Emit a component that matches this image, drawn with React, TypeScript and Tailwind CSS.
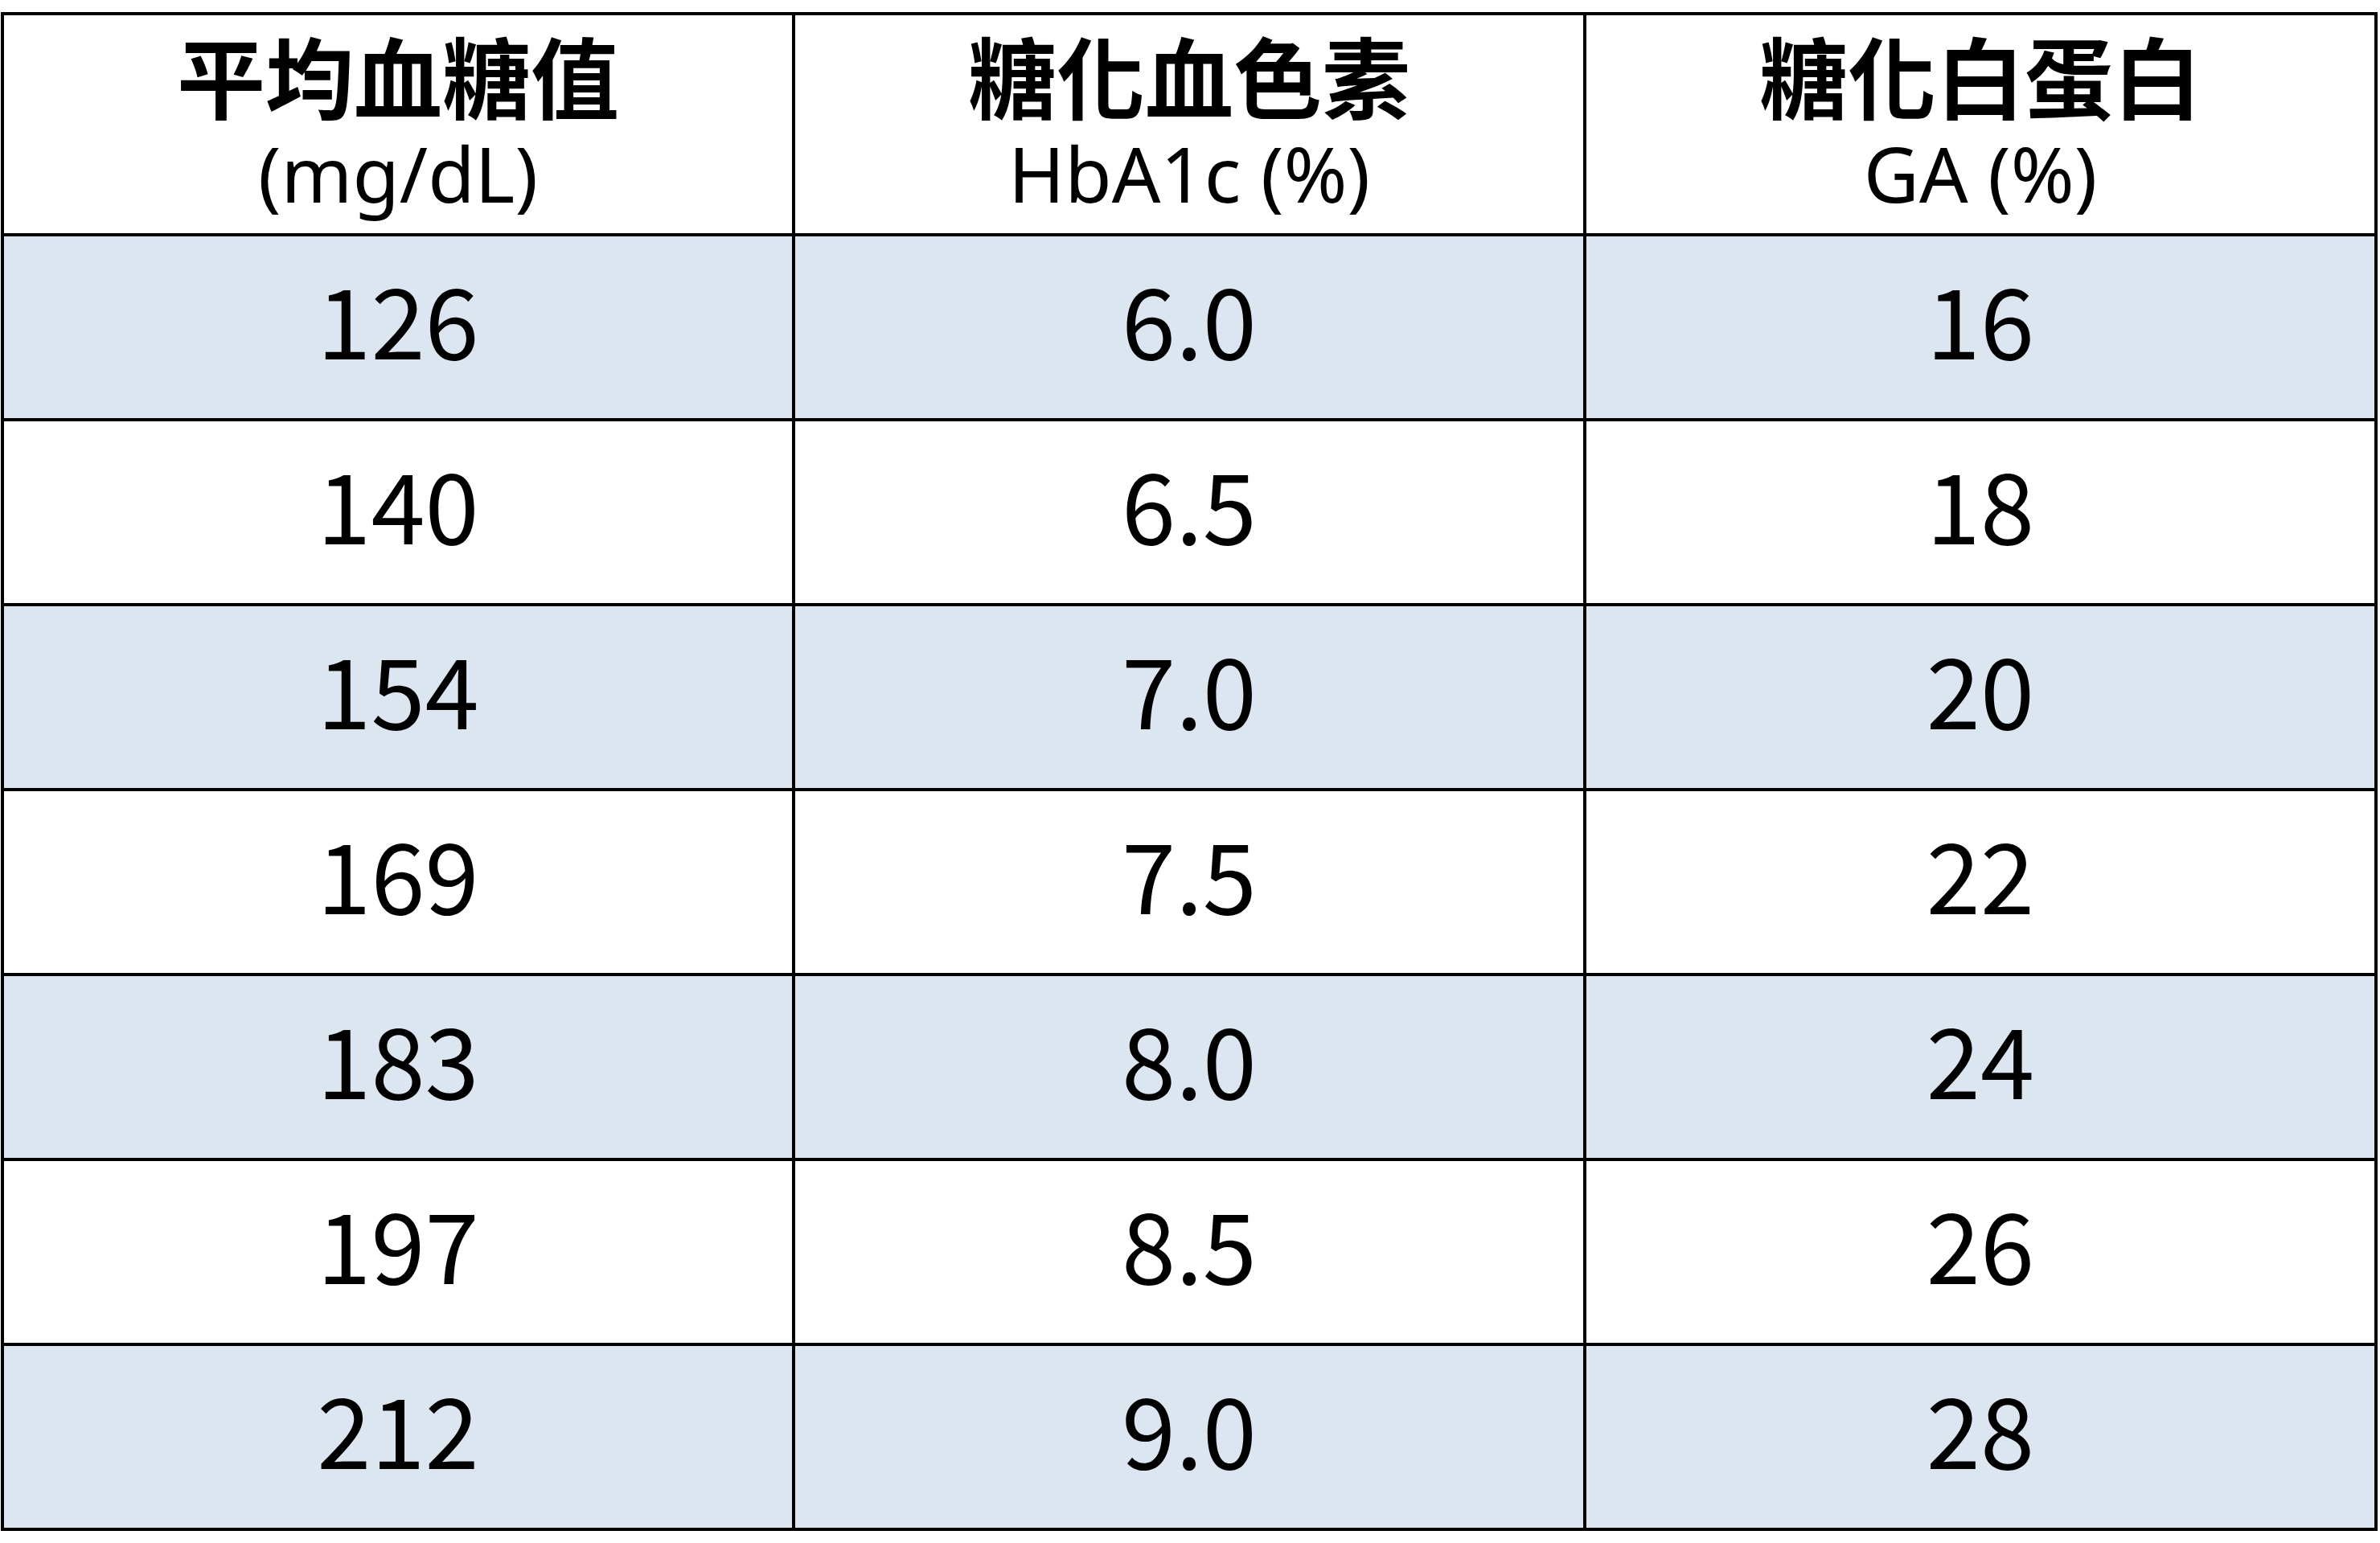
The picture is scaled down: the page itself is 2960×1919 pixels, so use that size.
const headers = [
  { zh: "平均血糖值", en: "(mg/dL)" },
  { zh: "糖化血色素", en: "HbA1c (%)" },
  { zh: "糖化白蛋白", en: "GA (%)" },
];

const rows = [
  ["126", "6.0", "16"],
  ["140", "6.5", "18"],
  ["154", "7.0", "20"],
  ["169", "7.5", "22"],
  ["183", "8.0", "24"],
  ["197", "8.5", "26"],
  ["212", "9.0", "28"],
];

export default function App() {
  return (
    <div className="w-[2960px] h-[1919px] bg-white overflow-hidden">
      <div className="ml-[1px] mt-[15px] w-[2956px] bg-black p-[4px] grid grid-cols-3 grid-rows-[271px_repeat(7,226px)] gap-[4px]">
        {headers.map((h) => (
          <div key={h.zh} className="bg-white flex flex-col items-center justify-start pt-[18px] text-black">
            <div className="text-[110px] leading-[110px] font-bold font-['Noto_Sans_CJK_TC',sans-serif]">{h.zh}</div>
            <div className="mt-[13px] text-[95px] leading-[110px] font-['Noto_Sans',sans-serif]">{h.en}</div>
          </div>
        ))}
        {rows.map((row, i) =>
          row.map((cell, j) => (
            <div
              key={`${i}-${j}`}
              className={`${i % 2 === 0 ? "bg-[#dce6f1]" : "bg-white"} flex items-center justify-center pb-[25px] text-black`}
            >
              <span className="text-[121px] leading-none font-['Noto_Sans_CJK_TC',sans-serif]">{cell}</span>
            </div>
          ))
        )}
      </div>
    </div>
  );
}
